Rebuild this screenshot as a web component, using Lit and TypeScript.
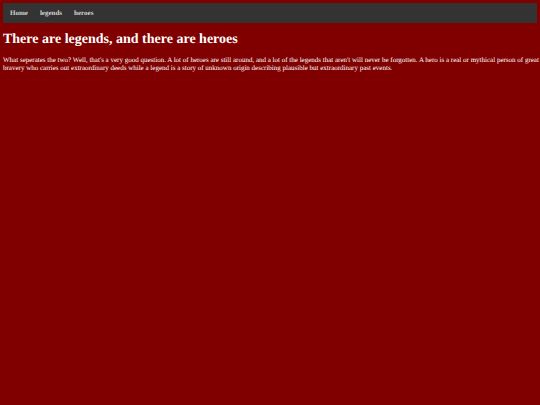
import { LitElement, html, css } from "lit";
import { customElement } from "lit/decorators.js";

@customElement("app-root")
export class AppRoot extends LitElement {
  static styles = css`
    :host {
      display: block;
      box-sizing: border-box;
      min-height: 100vh;
      padding: 3px 0 3px 3px;
      background: #800000;
      color: #fff;
      font-family: "Liberation Serif", "Times New Roman", serif;
      text-rendering: geometricPrecision;
    }
    .nav {
      margin-right: 3px;
    }
    .menu {
      display: flex;
      margin: 0;
      padding: 0;
      list-style: none;
      background: #333;
    }
    .link {
      display: block;
      padding: 6px 5px 6px 7px;
      color: #d3d3d3;
      font-size: 7px;
      font-weight: bold;
      line-height: 8px;
      text-decoration: none;
    }
    .title {
      margin: 9px 0 8px;
      font-size: 14px;
      line-height: 16px;
    }
    .text {
      margin: 0;
      font-size: 7px;
      line-height: 8px;
    }
  `;

  private links = ["Home", "legends", "heroes"];

  render() {
    return html`
      <nav class="nav">
        <ul class="menu">
          ${this.links.map(
            (name) => html`<li><a class="link" href="#${name.toLowerCase()}">${name}</a></li>`
          )}
        </ul>
      </nav>
      <main>
        <h1 class="title">There are legends, and there are heroes</h1>
        <p class="text">
          What seperates the two? Well, that's a very good question. A lot of heroes are still
          around, and a lot of the legends that aren't will never be forgotten. A hero is a real or
          mythical person of great bravery who carries out extraordinary deeds while a legend is a
          story of unknown origin describing plausible but extraordinary past events.
        </p>
      </main>
    `;
  }
}
